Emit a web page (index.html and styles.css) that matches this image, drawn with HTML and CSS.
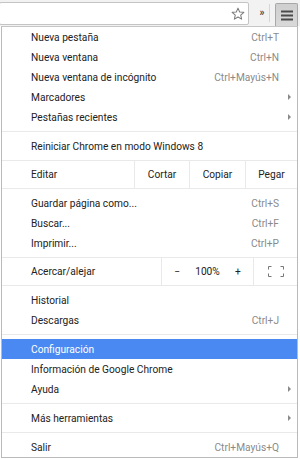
FILE: index.html
```html
<!DOCTYPE html>
<html lang="es">
<head>
<meta charset="utf-8">
<title>Menú de Chrome</title>
<link rel="stylesheet" href="styles.css">
</head>
<body>
<div class="toolbar">
  <div class="omnibox">
    <svg class="star" width="14" height="14" viewBox="0 0 15 15"><path d="M7.5 1.2 L9.3 5.3 L13.8 5.7 L10.4 8.6 L11.4 13 L7.5 10.7 L3.6 13 L4.6 8.6 L1.2 5.7 L5.7 5.3 Z" fill="none" stroke="#7a7a7a" stroke-width="1.1" stroke-linejoin="round"/></svg>
  </div>
  <div class="chevron">»</div>
  <div class="tsep"></div>
  <div class="menubtn">
    <svg width="12" height="11" viewBox="0 0 12 11"><rect x="0" y="0.5" width="12" height="2" fill="#4a4a4a"/><rect x="0" y="4.5" width="12" height="2" fill="#4a4a4a"/><rect x="0" y="8.5" width="12" height="2" fill="#4a4a4a"/></svg>
  </div>
</div>
<div class="menu">
  <div class="item"><span class="label">Nueva pestaña</span><span class="accel">Ctrl+T</span></div>
  <div class="item"><span class="label">Nueva ventana</span><span class="accel">Ctrl+N</span></div>
  <div class="item"><span class="label">Nueva ventana de incógnito</span><span class="accel">Ctrl+Mayús+N</span></div>
  <div class="item"><span class="label">Marcadores</span><span class="arrow"></span></div>
  <div class="item"><span class="label">Pestañas recientes</span><span class="arrow"></span></div>
  <div class="sep"></div>
  <div class="item"><span class="label">Reiniciar Chrome en modo Windows 8</span></div>
  <div class="btnrow edit">
    <span class="rowlabel">Editar</span>
    <span class="cell">Cortar</span>
    <span class="cell">Copiar</span>
    <span class="cell">Pegar</span>
  </div>
  <div class="item"><span class="label">Guardar página como...</span><span class="accel">Ctrl+S</span></div>
  <div class="item"><span class="label">Buscar...</span><span class="accel">Ctrl+F</span></div>
  <div class="item"><span class="label">Imprimir...</span><span class="accel">Ctrl+P</span></div>
  <div class="btnrow zoom">
    <span class="rowlabel">Acercar/alejar</span>
    <span class="zoomctl"><span>−</span><span>100%</span><span>+</span></span>
    <span class="cell">
      <svg width="16" height="11" viewBox="0 0 16 11"><path d="M0.5 3.5 V0.5 H3.5 M12.5 0.5 H15.5 V3.5 M15.5 7.5 V10.5 H12.5 M3.5 10.5 H0.5 V7.5" fill="none" stroke="#777" stroke-width="1"/></svg>
    </span>
  </div>
  <div class="item"><span class="label">Historial</span></div>
  <div class="item"><span class="label">Descargas</span><span class="accel">Ctrl+J</span></div>
  <div class="sep"></div>
  <div class="item active"><span class="label">Configuración</span></div>
  <div class="item"><span class="label">Información de Google Chrome</span></div>
  <div class="item"><span class="label">Ayuda</span><span class="arrow"></span></div>
  <div class="sep"></div>
  <div class="item"><span class="label">Más herramientas</span><span class="arrow"></span></div>
  <div class="sep"></div>
  <div class="item"><span class="label">Salir</span><span class="accel">Ctrl+Mayús+Q</span></div>
</div>
</body>
</html>
```
FILE: styles.css
```css
html, body {
  margin: 0;
  padding: 0;
  background: #ffffff;
}
body {
  width: 300px;
  height: 459px;
  overflow: hidden;
  font-family: "Roboto", "Open Sans", sans-serif;
  font-size: 10.2px;
  color: #222222;
}
.toolbar {
  height: 26px;
  background: #f2f2f2;
  display: flex;
  align-items: center;
}
.omnibox {
  width: 250px;
  height: 23px;
  margin-left: -1px;
  margin-top: 2px;
  align-self: flex-start;
  box-sizing: border-box;
  border: 1px solid #c4c4c4;
  border-radius: 2px;
  background: #ffffff;
  display: flex;
  align-items: center;
  justify-content: flex-end;
  padding-right: 3px;
}
.star {
  display: block;
}
.chevron {
  width: 14px;
  margin-left: 6px;
  text-align: center;
  font-size: 10px;
  font-weight: bold;
  color: #444444;
  line-height: 1;
}
.tsep {
  width: 1px;
  height: 18px;
  background: #d6d6d6;
}
.menubtn {
  width: 23px;
  height: 23px;
  margin-left: 5px;
  align-self: flex-end;
  box-sizing: border-box;
  border: 1px solid #a8a8a8;
  border-bottom: none;
  border-radius: 2px 2px 0 0;
  background: linear-gradient(#cfcfcf, #d9d9d9);
  display: flex;
  align-items: center;
  justify-content: center;
}
.menubtn svg {
  display: block;
}
.menu {
  margin-left: 1px;
  width: 297px;
  box-sizing: border-box;
  border: 1px solid #bababa;
  border-top-color: #c6c6c6;
  background: #ffffff;
}
.item {
  height: 20px;
  display: flex;
  align-items: center;
  padding-left: 29px;
  padding-right: 6px;
  white-space: nowrap;
}
.label {
  flex: 1;
}
.accel {
  color: #8a8a8a;
  margin-right: 12px;
}
.arrow {
  width: 0;
  height: 0;
  border-top: 3px solid transparent;
  border-bottom: 3px solid transparent;
  border-left: 3px solid #8a8a8a;
}
.item.active {
  background: #4a89f2;
  color: #ffffff;
}
.sep {
  height: 9px;
  display: flex;
  align-items: center;
}
.sep::before {
  content: "";
  display: block;
  width: 100%;
  height: 1px;
  background: #e9e9e9;
}
.btnrow {
  display: grid;
  height: 29px;
  box-sizing: border-box;
  border-top: 1px solid #e9e9e9;
  border-bottom: 1px solid #e9e9e9;
  margin: 4px 0;
  align-items: stretch;
}
.btnrow.edit {
  grid-template-columns: 132px 55px 56px 1fr;
}
.btnrow.zoom {
  grid-template-columns: 159px 92px 1fr;
}
.rowlabel {
  display: flex;
  align-items: center;
  padding-left: 29px;
}
.cell {
  display: flex;
  align-items: center;
  justify-content: center;
  border-left: 1px solid #e9e9e9;
}
.zoomctl {
  display: grid;
  grid-template-columns: 1fr 1fr 1fr;
  align-items: center;
  justify-items: center;
  border-left: 1px solid #e9e9e9;
}
```
